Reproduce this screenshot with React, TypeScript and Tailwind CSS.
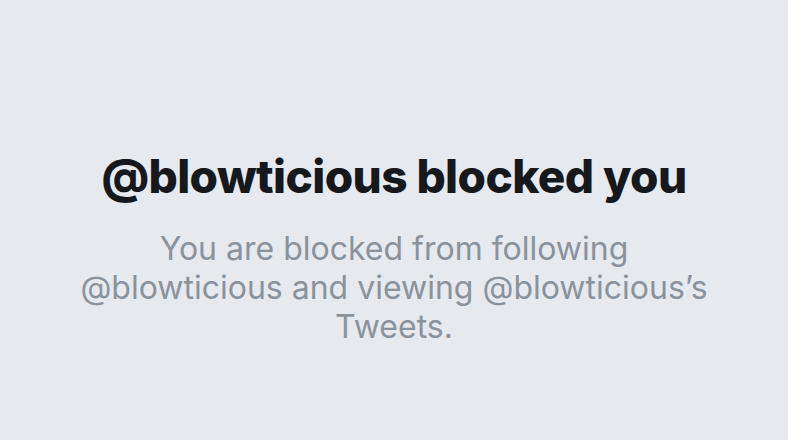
export default function App() {
  return (
    <div className="w-[788px] h-[440px] bg-[#e6e9ee] flex flex-col items-center pt-[150px] font-['Inter',sans-serif] overflow-hidden">
      {/* Title */}
      <h1 className="text-[46px] leading-[52px] font-extrabold text-[#15181c] tracking-[-0.6px] text-center whitespace-nowrap">
        @blowticious blocked you
      </h1>

      {/* Body */}
      <p className="mt-[27px] text-[32px] leading-[39px] text-[#8a939c] text-center whitespace-nowrap">
        You are blocked from following
        <br />
        @blowticious and viewing @blowticious’s
        <br />
        Tweets.
      </p>
    </div>
  );
}
